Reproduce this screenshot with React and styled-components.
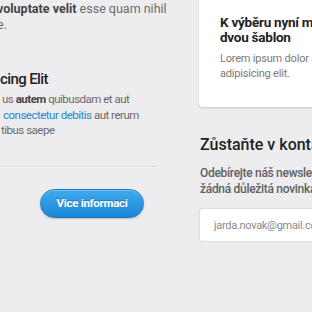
import React from 'react'
import styled, { createGlobalStyle } from 'styled-components'

const Global = createGlobalStyle`
  html, body {
    margin: 0;
    padding: 0;
    background: #ededef;
  }
  body {
    font-family: Roboto, "Liberation Sans", sans-serif;
    overflow: hidden;
  }
`

const Page = styled.div`
  width: 312px;
  height: 312px;
  overflow: hidden;
  display: grid;
  grid-template-columns: 157px 1fr;
  column-gap: 42px;
`

const Main = styled.div`
  display: flex;
  flex-direction: column;
  padding-top: 1px;
`

const Text = styled.div`
  font-size: ${props => props.size || 11.5}px;
  line-height: ${props => props.lh || 15.5}px;
  letter-spacing: ${props => props.tight || 0}px;
  color: #6a6a6c;
  white-space: nowrap;
`

const Line = styled.div`
  margin-left: ${props => props.indent || 0}px;
`

const Strong = styled.b`
  font-weight: 700;
  color: #444446;
`

const Link = styled.a`
  color: #2a86d4;
  text-decoration: none;
`

const Heading = styled.h2`
  margin: 36px 0 3px 0;
  font-size: 15px;
  line-height: 20px;
  letter-spacing: -0.6px;
  font-weight: 500;
  color: #222;
  white-space: nowrap;
`

const Divider = styled.hr`
  margin: 27px 0 0 0;
  border: 0;
  border-top: 1px solid #dadadc;
  border-bottom: 1px solid #f7f7f8;
  height: 0;
  width: 157px;
`

const Button = styled.button`
  margin: 21px 0 0 40px;
  width: 104px;
  height: 29px;
  border-radius: 15px;
  border: 1px solid #1877c2;
  background: linear-gradient(#3eaaec, #1c86d6);
  box-shadow: inset 0 1px 0 rgba(255, 255, 255, 0.35), 0 1px 2px rgba(0, 0, 0, 0.2);
  color: #fff;
  font-family: Roboto, "Liberation Sans", sans-serif;
  font-size: 11.5px;
  letter-spacing: -0.3px;
  font-weight: 700;
  text-shadow: 0 -1px 0 rgba(0, 0, 0, 0.25);
  padding: 0;
`

const Side = styled.div`
  display: flex;
  flex-direction: column;
`

const Card = styled.div`
  margin-top: -10px;
  height: 117px;
  box-sizing: border-box;
  background: #fff;
  border-radius: 3px;
  box-shadow: 0 1px 2px rgba(0, 0, 0, 0.16);
  padding: 25px 0 0 21px;
  width: 160px;
`

const CardTitle = styled.h3`
  margin: 0;
  font-size: 13.5px;
  line-height: 15px;
  letter-spacing: -0.25px;
  font-weight: 700;
  color: #222;
  white-space: nowrap;
`

const CardText = styled.p`
  margin: 7px 0 0 0;
  font-size: 11px;
  line-height: 14.5px;
  letter-spacing: -0.2px;
  color: #7a7a7c;
  white-space: nowrap;
`

const SideTitle = styled.h2`
  margin: 28px 0 0 1px;
  font-size: 16px;
  line-height: 20px;
  font-weight: 500;
  color: #1f1f21;
  white-space: nowrap;
`

const Lead = styled.p`
  margin: 10px 0 0 1px;
  font-size: 12px;
  line-height: 16px;
  letter-spacing: -0.3px;
  font-weight: 500;
  color: #606062;
  white-space: nowrap;
`

const Input = styled.input`
  margin-top: 11px;
  width: 140px;
  height: 34px;
  box-sizing: border-box;
  border: 1px solid #dcdcde;
  border-radius: 3px;
  background: #fff;
  padding: 0 0 0 14px;
  font-family: Roboto, "Liberation Sans", sans-serif;
  font-size: 11px;
  letter-spacing: -0.3px;
  outline: none;
  &::placeholder {
    color: #8a8a8c;
  }
`

export default function App () {
  return (
    <>
      <Global />
      <Page>
        <Main>
          <Text size={12.5} lh={16}>
            <Line indent={-3}><Strong>voluptate velit</Strong> esse quam nihil</Line>
            <Line indent={-3}>e.</Line>
          </Text>
          <Heading>cing Elit</Heading>
          <Text tight={-0.5}>
            <Line indent={2}>us <Strong>autem</Strong> quibusdam et aut</Line>
            <Line indent={3}><Link href='#'>consectetur debitis</Link> aut rerum</Line>
            <Line indent={1}>tibus saepe</Line>
          </Text>
          <Divider />
          <Button>Vice informaci</Button>
        </Main>
        <Side>
          <Card>
            <CardTitle>K výběru nyní máte<br />dvou šablon</CardTitle>
            <CardText>Lorem ipsum dolor sit amet,<br />adipisicing elit.</CardText>
          </Card>
          <SideTitle>Zůstaňte v kontaktu</SideTitle>
          <Lead>Odebírejte náš newsletter<br />žádná důležitá novinka</Lead>
          <Input placeholder='jarda.novak@gmail.com' />
        </Side>
      </Page>
    </>
  )
}
